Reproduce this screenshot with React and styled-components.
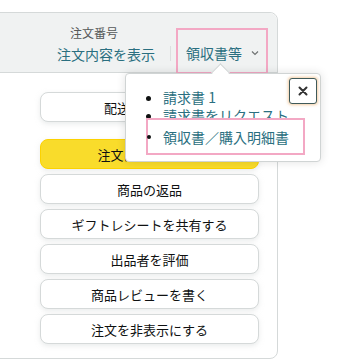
import React from 'react';
import styled, { createGlobalStyle } from 'styled-components';

const GlobalStyle = createGlobalStyle`
  body {
    margin: 0;
    background: #ffffff;
    font-family: "Noto Sans CJK JP", "Noto Sans", sans-serif;
    color: #0f1111;
  }
`;

const Page = styled.div`
  padding-top: 12px;
  width: 356px;
  height: 361px;
  overflow: hidden;
  position: relative;
`;

const Card = styled.div`
  position: relative;
  margin-left: -40px;
  width: 318px;
  height: 347px;
  box-sizing: border-box;
  border: 1px solid #d5d9d9;
  border-radius: 8px;
`;

const Header = styled.div`
  height: 60px;
  box-sizing: border-box;
  background: #f0f2f2;
  border-bottom: 1px solid #d5d9d9;
  border-radius: 8px 8px 0 0;
  display: flex;
  justify-content: flex-end;
  align-items: flex-end;
  padding-right: 9px;
`;

const OrderInfo = styled.div`
  display: flex;
  flex-direction: column;
  margin-bottom: 8px;
`;

const Label = styled.span`
  font-size: 12px;
  line-height: 16px;
  color: #565959;
  margin-left: 13px;
  margin-bottom: 3px;
`;

const HeaderLink = styled.span`
  font-size: 14px;
  line-height: 20px;
  color: #2a6f80;
  white-space: nowrap;
`;

const Separator = styled.span`
  width: 1px;
  height: 15px;
  background: #dcdfdf;
  margin: 0 5px 11px 15px;
`;

const ReceiptBox = styled.div`
  height: 46px;
  box-sizing: border-box;
  margin-bottom: -2px;
  border: 2px solid #f3a8c4;
  padding: 4px 7px 0 8px;
  display: flex;
  align-items: center;
  gap: 9px;
`;

const Chevron = styled.svg`
  width: 8px;
  height: 6px;
`;

const Body = styled.div`
  display: flex;
  justify-content: flex-end;
  padding: 19px 18px 0 0;
`;

const Actions = styled.div`
  width: 219px;
  display: flex;
  flex-direction: column;
  gap: 5px;
`;

const ActionButton = styled.div`
  height: 30px;
  box-sizing: border-box;
  border-radius: 8px;
  border: 1px solid ${p => (p.$primary ? '#fcd200' : '#d5d9d9')};
  background: ${p => (p.$primary ? '#f9dc2b' : '#ffffff')};
  box-shadow: 0 2px 5px rgba(213, 217, 217, 0.5);
  display: flex;
  align-items: center;
  justify-content: center;
  font-size: 13px;
  color: #0f1111;
  margin-bottom: ${p => (p.$spaced ? '12px' : '0')};
`;

const Popover = styled.div`
  position: absolute;
  left: 125px;
  top: 73px;
  width: 196px;
  height: 89px;
  box-sizing: border-box;
  background: #ffffff;
  border: 1px solid #d0d4d4;
  border-radius: 4px;
  box-shadow: 0 0 10px rgba(0, 0, 0, 0.12);
  &::before {
    content: '';
    position: absolute;
    left: 88px;
    top: -8px;
    width: 12px;
    height: 12px;
    background: #ffffff;
    border-top: 1px solid #d0d4d4;
    border-left: 1px solid #d0d4d4;
    transform: rotate(45deg);
  }
`;

const MenuList = styled.ul`
  margin: 0;
  padding: 14px 0 0 37px;
  list-style: disc;
  font-size: 14px;
  line-height: 18px;
  color: #2a6f80;
  & li::marker {
    color: #0f1111;
  }
`;

const PlainItem = styled.li`
  list-style: none;
`;

const Highlight = styled.div`
  position: relative;
  margin: -6px 0 0 -17px;
  width: 159px;
  height: 37px;
  box-sizing: border-box;
  border: 2px solid #f3a8c4;
  background: #ffffff;
  padding-left: 15px;
  display: flex;
  align-items: center;
  white-space: nowrap;
`;

const Dot = styled.span`
  position: absolute;
  left: -1px;
  top: 15px;
  width: 4px;
  height: 4px;
  border-radius: 50%;
  background: #0f1111;
`;

const CloseButton = styled.div`
  position: absolute;
  left: 163px;
  top: 4px;
  width: 28px;
  height: 26px;
  box-sizing: border-box;
  border: 1px solid #3f5a5a;
  border-radius: 3px;
  background: #ffffff;
  box-shadow: 0 0 3px 1px rgba(232, 164, 90, 0.55);
  display: flex;
  align-items: center;
  justify-content: center;
`;

const actions = ['商品の返品', 'ギフトレシートを共有する', '出品者を評価', '商品レビューを書く', '注文を非表示にする'];

export default function App() {
  return (
    <Page>
      <GlobalStyle />
      <Card>
        <Header>
          <OrderInfo>
            <Label>注文番号</Label>
            <HeaderLink>注文内容を表示</HeaderLink>
          </OrderInfo>
          <Separator />
          <ReceiptBox>
            <HeaderLink>領収書等</HeaderLink>
            <Chevron viewBox="0 0 8 6">
              <path d="M1 1.5 L4 4.5 L7 1.5" fill="none" stroke="#6f7373" strokeWidth="1.2" />
            </Chevron>
          </ReceiptBox>
        </Header>
        <Body>
          <Actions>
            <ActionButton $spaced>配送状況を確認</ActionButton>
            <ActionButton $primary>注文に関する問題</ActionButton>
            {actions.map(a => (
              <ActionButton key={a}>{a}</ActionButton>
            ))}
          </Actions>
        </Body>
      </Card>
      <Popover>
        <MenuList>
          <li>請求書 1</li>
          <li>請求書をリクエスト</li>
          <PlainItem>
            <Highlight>
              <Dot />
              領収書／購入明細書
            </Highlight>
          </PlainItem>
        </MenuList>
        <CloseButton>
          <svg width="10" height="10" viewBox="0 0 10 10">
            <path d="M1.5 1.5 L8.5 8.5 M8.5 1.5 L1.5 8.5" stroke="#333" strokeWidth="2" strokeLinecap="round" />
          </svg>
        </CloseButton>
      </Popover>
    </Page>
  );
}
